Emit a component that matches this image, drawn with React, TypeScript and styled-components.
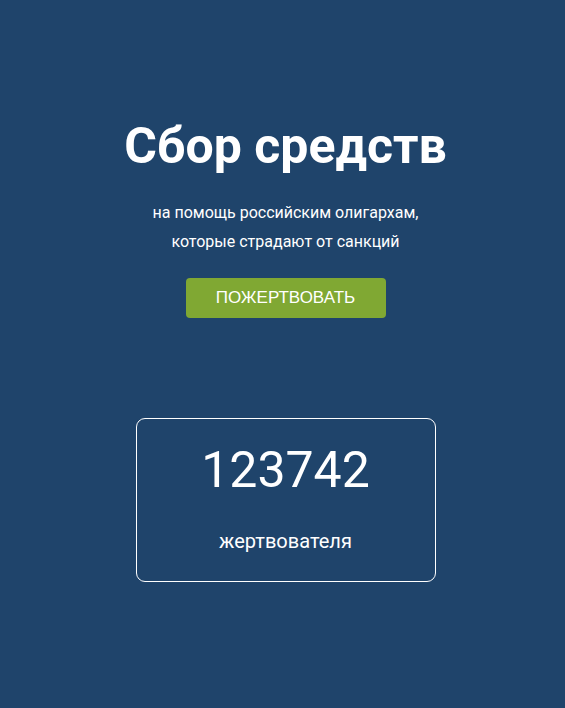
import styled, { createGlobalStyle } from 'styled-components';

const GlobalStyle = createGlobalStyle`
    html, body {
        margin: 0;
        padding: 0;
        background: #1f446b;
    }
`;

const Page = styled.div`
    min-height: 708px;
    background: #1f446b;
    color: #ffffff;
    font-family: Roboto, 'Liberation Sans', sans-serif;
    display: flex;
    flex-direction: column;
    align-items: center;
    padding: 116px 0 0 6px;
    box-sizing: border-box;
`;

const Title = styled.h1`
    margin: 0;
    font-size: 50px;
    font-weight: 700;
    line-height: 60px;
`;

const Subtitle = styled.p`
    margin: 22px 0 0;
    font-size: 16px;
    line-height: 29px;
    text-align: center;
`;

const DonateButton = styled.button`
    margin-top: 22px;
    width: 200px;
    height: 40px;
    border: none;
    border-radius: 4px;
    background: #80a833;
    color: #ffffff;
    font-family: 'Liberation Sans', Arial, sans-serif;
    font-size: 17px;
    cursor: pointer;
`;

const CounterCard = styled.div`
    margin-top: 100px;
    width: 300px;
    height: 164px;
    box-sizing: border-box;
    border: 1px solid #ffffff;
    border-radius: 9px;
    display: flex;
    flex-direction: column;
    align-items: center;
    padding-top: 21px;
`;

const Count = styled.div`
    font-size: 50px;
    line-height: 60px;
    font-weight: 400;
`;

const CountLabel = styled.div`
    margin-top: 29px;
    font-size: 20px;
    line-height: 24px;
`;

const App = () => (
    <>
        <GlobalStyle />
        <Page>
            <Title>Сбор средств</Title>
            <Subtitle>
                на помощь российским олигархам,
                <br />
                которые страдают от санкций
            </Subtitle>
            <DonateButton>ПОЖЕРТВОВАТЬ</DonateButton>
            <CounterCard>
                <Count>123742</Count>
                <CountLabel>жертвователя</CountLabel>
            </CounterCard>
        </Page>
    </>
);

export default App;
